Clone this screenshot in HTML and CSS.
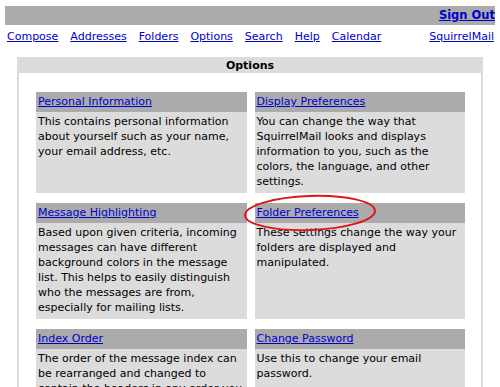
FILE: index.html
```html
<!DOCTYPE html>
<html lang="en">
<head>
<meta charset="UTF-8">
<meta name="viewport" content="width=device-width, initial-scale=1.0">
<title>SquirrelMail - Options</title>
<link rel="stylesheet" href="styles.css">
</head>
<body>
    <div class="topbar">
        <a href="#" class="signout">Sign Out</a>
    </div>
    <div class="nav">
        <a href="#">Compose</a>
        <a href="#">Addresses</a>
        <a href="#">Folders</a>
        <a href="#">Options</a>
        <a href="#">Search</a>
        <a href="#">Help</a>
        <a href="#">Calendar</a>
        <a href="#" class="brand">SquirrelMail</a>
    </div>
    <div class="options">
        <div class="options-title">Options</div>
        <div class="options-body">
            <div class="card">
                <div class="card-head"><a href="#">Personal Information</a></div>
                <div class="card-text">This contains personal information about yourself such as your name, your email address, etc.</div>
            </div>
            <div class="card">
                <div class="card-head"><a href="#">Display Preferences</a></div>
                <div class="card-text">You can change the way that SquirrelMail looks and displays information to you, such as the colors, the language, and other settings.</div>
            </div>
            <div class="card">
                <div class="card-head"><a href="#">Message Highlighting</a></div>
                <div class="card-text">Based upon given criteria, incoming messages can have different background colors in the message list. This helps to easily distinguish who the messages are from, especially for mailing lists.</div>
            </div>
            <div class="card">
                <div class="card-head"><a href="#">Folder Preferences</a></div>
                <div class="card-text">These settings change the way your folders are displayed and manipulated.</div>
                <svg class="circle" width="138" height="40" viewBox="0 0 138 40">
                    <ellipse cx="68" cy="19" rx="65" ry="17" fill="none" stroke="#e0141e" stroke-width="2" transform="rotate(-2 68 19)"/>
                </svg>
            </div>
            <div class="card">
                <div class="card-head"><a href="#">Index Order</a></div>
                <div class="card-text">The order of the message index can be rearranged and changed to contain the headers in any order you want.</div>
            </div>
            <div class="card">
                <div class="card-head"><a href="#">Change Password</a></div>
                <div class="card-text">Use this to change your email password.</div>
            </div>
        </div>
    </div>
</body>
</html>
```
FILE: styles.css
```css
body {
    margin: 0;
    font-family: "DejaVu Sans", Verdana, sans-serif;
    font-size: 11px;
    color: #000;
    background-color: #fff;
}
a {
    color: #0000cc;
}
.topbar {
    margin: 6px 5px 0;
    height: 19px;
    background-color: #ababab;
    text-align: right;
    line-height: 19px;
}
.signout {
    font-weight: bold;
    font-size: 11.5px;
}
.nav {
    display: flex;
    gap: 12px;
    margin: 4px 6px 0 7px;
    line-height: 15px;
}
.nav .brand {
    margin-left: auto;
}
.options {
    margin: 13px 17px 0;
    padding: 0 2px 2px;
    background-color: #dcdcdc;
}
.options-title {
    height: 16px;
    line-height: 17px;
    text-align: center;
    font-weight: bold;
}
.options-body {
    display: grid;
    grid-template-columns: 1fr 1fr;
    column-gap: 8px;
    row-gap: 10px;
    padding: 19px 16px 16px 17px;
    background-color: #fff;
}
.card {
    position: relative;
    display: flex;
    flex-direction: column;
}
.card-head {
    height: 20px;
    line-height: 20px;
    padding: 0 2px;
    background-color: #ababab;
}
.card-text {
    flex: 1;
    padding: 2px 2px 4px;
    line-height: 15px;
    background-color: #dcdcdc;
}
/* red annotation ring drawn over the Folder Preferences title */
.circle {
    position: absolute;
    left: -13px;
    top: -9px;
}
```
